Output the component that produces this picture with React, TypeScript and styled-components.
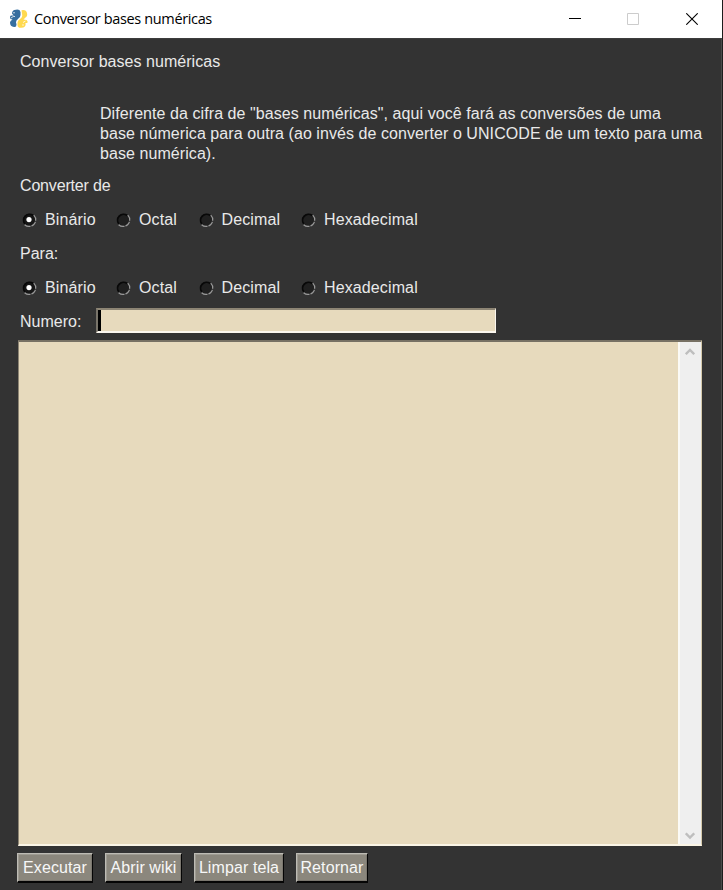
import React, { useState } from "react";
import styled, { createGlobalStyle } from "styled-components";

const GlobalStyle = createGlobalStyle`
  * { box-sizing: border-box; }
  body { margin: 0; background: #333333; overflow: hidden; }
`;

const Window = styled.div`
  display: flex;
  flex-direction: column;
  width: 723px;
  height: 890px;
  background: #333333;
  color: #e9e9e9;
  font: 16px/20px "Liberation Sans", Arial, sans-serif;
  border-right: 1px solid #1d1d1d;
`;

const TitleBar = styled.header`
  display: flex;
  align-items: center;
  height: 38px;
  flex: none;
  padding: 0 1px 0 9px;
  background: #ffffff;
  color: #000000;
`;

const Title = styled.h1`
  flex: 1;
  margin: 0 0 0 5px;
  font: 400 14.5px/20px "Open Sans", "Noto Sans", sans-serif;
  letter-spacing: -0.36px;
  white-space: nowrap;
`;

const WindowButton = styled.button`
  display: flex;
  align-items: center;
  justify-content: center;
  width: 58.5px;
  height: 38px;
  padding: 0;
  border: 0;
  background: transparent;
`;

const Body = styled.main`
  display: flex;
  flex: 1;
  flex-direction: column;
  padding: 13px 20px 0 18px;
  border-top: 1px solid #3c3c3c;
  border-right: 1px solid #4a4a4a;
`;

const Line = styled.div<{ $height: number; $spacing?: number }>`
  display: flex;
  align-items: flex-start;
  flex: none;
  height: ${(p) => p.$height}px;
  padding-left: 2px;
  letter-spacing: ${(p) => p.$spacing ?? 0}px;
  white-space: nowrap;
`;

const Description = styled.p`
  flex: none;
  height: 72px;
  margin: 0 0 0 82px;
  letter-spacing: 0.07px;
  white-space: pre;
`;

const Option = styled.label<{ $width: number }>`
  display: flex;
  align-items: center;
  width: ${(p) => p.$width}px;
  height: 20px;
`;

const HiddenRadio = styled.input`
  appearance: none;
  width: 0;
  height: 0;
  margin: 0;
`;

const OptionText = styled.span`
  margin-left: 7px;
`;

const NumberInput = styled.input`
  width: 400px;
  height: 25px;
  margin: -4px 0 0 15px;
  padding: 0 3px;
  border: solid;
  border-width: 2px 1px 2px 2px;
  border-color: #8d8574 #fbf7ef #fbf7ef #79746a;
  outline: 0;
  background: #e7dabd;
  color: #000000;
  font: inherit;
  caret-color: transparent;
`;

const InputHolder = styled.div`
  position: relative;
  display: flex;
`;

const Caret = styled.i`
  position: absolute;
  left: 17px;
  top: -2px;
  width: 3px;
  height: 21px;
  background: #000000;
`;

const OutputPanel = styled.section`
  display: flex;
  flex: none;
  width: 684px;
  height: 506px;
  border: solid;
  border-width: 2px 1px 2px 1px;
  border-color: #777164 #d5c9aa #fbf5e6 #8d8574;
  background: #e7dabd;
`;

const Output = styled.textarea`
  flex: 1;
  padding: 2px;
  border: 0;
  border-right: 2px solid #fbfaf6;
  outline: 0;
  resize: none;
  background: transparent;
  color: #000000;
  font: inherit;
`;

const Scrollbar = styled.div`
  display: flex;
  flex-direction: column;
  align-items: center;
  justify-content: space-between;
  width: 21px;
  padding: 6px 1px 4px 0;
  background: #efefef;
`;

const Actions = styled.footer`
  display: flex;
  gap: 12px;
  margin: 7px 0 0 -1px;
`;

const ActionButton = styled.button<{ $width: number }>`
  width: ${(p) => p.$width}px;
  height: 30px;
  padding: 1px 0 0;
  border: solid;
  border-width: 1px 1px 2px 1px;
  border-color: #bdbbb4 #050505 #050505 #bdbbb4;
  background: #8b877d;
  box-shadow: inset 1px 1px #9e9b92, inset -1px -1px #7b776f;
  color: #f7f7f7;
  font: inherit;
  letter-spacing: 0.1px;
  white-space: nowrap;
`;

function PythonIcon() {
  return (
    <svg width="20" height="20" viewBox="0 0 20 20">
      <path d="M3 4.5Q3 1 7 .7Q11 .2 11.5 3V6Q11.5 8.5 9 10L7.5 11.5Q6.5 13 7.5 15.5Q7.5 18.5 5 18Q1 17.5 1 13.5Q1 12 3.5 10.5L1.5 10Q.2 6.5 2.5 6.5H4.5Z" fill="#366e9f" />
      <path d="M12.5 1.3Q17 .2 18 4Q18.8 7 16.5 8.5L14.5 10.5L17.5 11Q19.5 13 18 14H16.5Q17.5 18.5 12 18.8Q8.5 19 8.5 16V13.5Q8.5 11.5 11 10Q14 8 13 5Z" fill="#ffd94f" />
      <path d="M2 9L5 7L6 8M14 13.5L16.5 12" stroke="#fff" strokeWidth=".8" fill="none" />
      <circle cx="5" cy="3.8" r=".7" fill="#fff" />
      <circle cx="14" cy="16" r=".7" fill="#fff" />
    </svg>
  );
}

function RadioMark({ checked }: { checked: boolean }) {
  return (
    <svg width="18" height="18" viewBox="0 0 18 18">
      <circle cx="9" cy="8.7" r="6" fill={checked ? "#161616" : "#202020"} />
      <path d="M4.8 12.9A6 6 0 0 1 13.2 4.5" fill="none" stroke="#080808" strokeWidth="1.8" />
      <path d="M13.8 4.1A6.6 6.6 0 0 1 4.4 13.5" fill="none" stroke="#999" strokeWidth="1.2" strokeDasharray="6 1" />
      {checked && <circle cx="9" cy="8.6" r="2.6" fill="#fff" />}
    </svg>
  );
}

function Chevron({ down = false }: { down?: boolean }) {
  return (
    <svg width="10" height="8" viewBox="0 0 10 8">
      <path d={down ? "M.8 1.3L5 5.5L9.2 1.3" : "M.8 6.2L5 2L9.2 6.2"} fill="none" stroke="#bebebe" strokeWidth="2.4" />
    </svg>
  );
}

const bases = [
  { name: "Binário", width: 94 },
  { name: "Octal", width: 82.5 },
  { name: "Decimal", width: 102.5 },
  { name: "Hexadecimal", width: 120 },
];

function BaseOptions({ group }: { group: string }) {
  const [selected, setSelected] = useState("Binário");
  return (
    <>
      {bases.map(({ name, width }) => (
        <Option key={name} $width={width}>
          <HiddenRadio type="radio" name={group} checked={selected === name} onChange={() => setSelected(name)} />
          <RadioMark checked={selected === name} />
          <OptionText>{name}</OptionText>
        </Option>
      ))}
    </>
  );
}

export default function App() {
  const [number, setNumber] = useState("");
  return (
    <Window>
      <GlobalStyle />
      <TitleBar>
        <PythonIcon />
        <Title>Conversor bases numéricas</Title>
        <WindowButton aria-label="Minimizar">
          <svg width="12" height="12"><path d="M0 5.5H12" stroke="#000" /></svg>
        </WindowButton>
        <WindowButton aria-label="Maximizar">
          <svg width="12" height="12"><path d="M.5 .5H11.5V11.5H.5Z" fill="none" stroke="#ccc" /></svg>
        </WindowButton>
        <WindowButton aria-label="Fechar">
          <svg width="12" height="12"><path d="M.3 .3L11.7 11.7M11.7 .3L.3 11.7" stroke="#000" strokeWidth="1.1" /></svg>
        </WindowButton>
      </TitleBar>
      <Body>
        <Line $height={52} $spacing={0.04}>Conversor bases numéricas</Line>
        <Description>
          {'Diferente da cifra de "bases numéricas", aqui você fará as conversões de uma\nbase númerica para outra (ao invés de converter o UNICODE de um texto para uma\nbase numérica).'}
        </Description>
        <Line $height={34} $spacing={-0.17}>Converter de</Line>
        <Line $height={34} $spacing={0.12}><BaseOptions group="source" /></Line>
        <Line $height={34}>Para:</Line>
        <Line $height={34} $spacing={0.12}><BaseOptions group="target" /></Line>
        <Line $height={28}>
          Numero:
          <InputHolder>
            <NumberInput aria-label="Numero" value={number} onChange={(e) => setNumber(e.target.value)} />
            <Caret />
          </InputHolder>
        </Line>
        <OutputPanel>
          <Output aria-label="Resultado" readOnly />
          <Scrollbar><Chevron /><Chevron down /></Scrollbar>
        </OutputPanel>
        <Actions>
          <ActionButton $width={76}>Executar</ActionButton>
          <ActionButton $width={77}>Abrir wiki</ActionButton>
          <ActionButton $width={90}>Limpar tela</ActionButton>
          <ActionButton $width={72}>Retornar</ActionButton>
        </Actions>
      </Body>
    </Window>
  );
}
